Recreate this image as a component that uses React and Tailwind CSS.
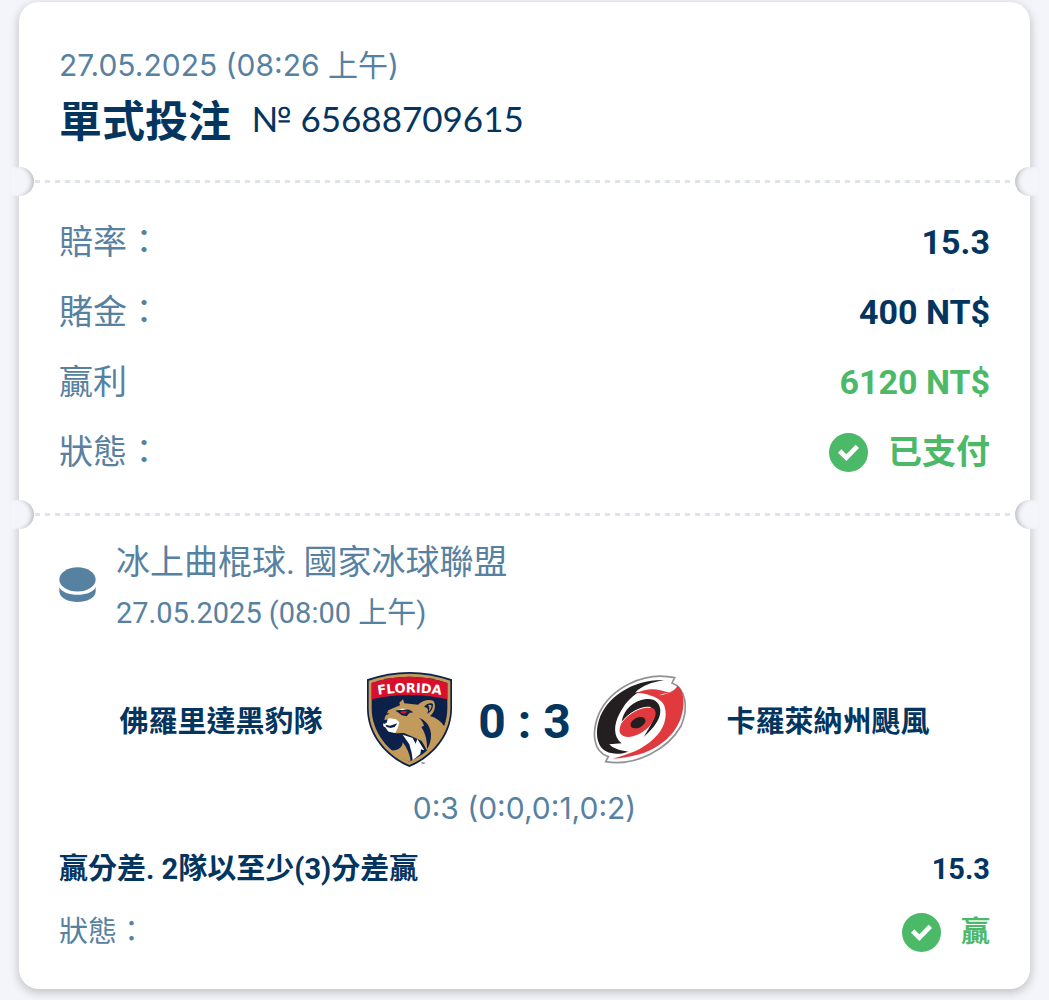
import React from "react";

const SANS = "font-['Roboto','Noto_Sans_CJK_TC',sans-serif]";
const CJK = "font-['Noto_Sans_CJK_TC',sans-serif]";
const GEO = "font-['Lato','Noto_Sans_CJK_TC',sans-serif]";
const WIDE = "font-['Inter','Noto_Sans_CJK_TC',sans-serif]";

function Divider() {
  return (
    <div className="relative h-[3px]">
      <div className="mx-4 h-full bg-[repeating-linear-gradient(90deg,#dfe3ee_0_5px,transparent_5px_10px)]" />
      <span className="absolute -left-2 -top-[13px] h-[29px] w-[23px] rounded-r-full bg-[#f4f5fa] shadow-[inset_-5px_0_5px_-3px_rgba(0,0,0,0.25)]" />
      <span className="absolute -right-2 -top-[13px] h-[29px] w-[23px] rounded-l-full bg-[#f4f5fa] shadow-[inset_5px_0_5px_-3px_rgba(0,0,0,0.25)]" />
    </div>
  );
}

function Check() {
  return (
    <svg viewBox="0 0 117 117" className="size-[39px] shrink-0" aria-hidden="true">
      <circle cx="58.5" cy="58.5" r="58.5" fill="#4cb968" />
      <path d="M32 54 L52 74 L85 40" fill="none" stroke="#fff" strokeWidth="14" />
    </svg>
  );
}

function Puck() {
  return (
    <svg viewBox="0 0 108 104" className="h-[35px] w-[37px] shrink-0" aria-hidden="true">
      <ellipse cx="54" cy="37" rx="54" ry="36" fill="#5781a1" />
      <path d="M0 60 C14 90 94 90 108 60 V73 C106 114 2 114 0 73 Z" fill="#5781a1" />
    </svg>
  );
}

function PanthersLogo() {
  return (
    <svg viewBox="33 36 288 288" className="size-24 shrink-0" role="img" aria-label="Florida Panthers">
      <path d="M51 58 Q178 14 306 58 V145 C306 225 250 292 178 321 C107 292 51 225 51 145 Z" fill="#0b2149" />
      <path d="M56 62 Q178 20 301 62 V145 C301 221 247 287 178 315 C110 287 56 221 56 145 Z" fill="#c29a5b" />
      <path d="M65 69 Q178 32 292 69 V145 C292 216 243 277 178 305 C114 277 65 216 65 145 Z" fill="#0b2149" />
      <path d="M65 69 Q178 32 292 69 V118 Q178 92 65 118 Z" fill="#d8102c" />
      <path id="shield-arc" d="M60 109 Q178 86 298 109" fill="none" />
      <text fontSize="39" fontWeight="700" fill="#fff" className="font-['DejaVu_Sans',sans-serif]">
        <textPath href="#shield-arc" startOffset="50%" textAnchor="middle">FLORIDA</textPath>
      </text>
      <path
        d="M104 173 L115 151 L136 142 L150 136 L148 128 L159 118 L163 130 L204 134 C216 121 236 117 250 122 C260 136 254 156 240 168 C258 173 274 184 284 201 C278 232 258 258 236 276 C230 274 226 258 214 242 L188 230 L162 219 L139 220 L113 213 L102 198 Z"
        fill="#c29a5b"
      />
      <path d="M222 140 C232 129 245 127 249 133 C249 148 241 158 231 162 C237 150 235 143 222 140 Z" fill="#0b2149" />
      <path d="M234 136 C241 132 245 135 245 139 C243 147 240 151 236 154 C239 146 239 141 234 136 Z" fill="#c29a5b" />
      <path d="M136 152 L158 147 L178 149 L190 157 L178 159 L170 169 L155 166 L146 158 Z" fill="#0b2149" />
      <path d="M150 155 L163 152 L173 155 L164 161 L154 160 Z" fill="#d8102c" />
      <path d="M140 149 L158 146 L172 147 L158 150 Z" fill="#fff" />
      <path d="M104 162 L118 158 L112 165 Z" fill="#0b2149" />
      <path d="M206 173 C226 180 241 196 243 222 C244 240 239 256 231 268 C232 246 228 222 214 201 L222 197 C219 186 214 179 206 173 Z" fill="#0b2149" />
      <path d="M99 181 L120 175 L138 178 L148 187 L144 202 L136 219 L116 215 L107 202 L100 199 Z" fill="#fff" />
      <path d="M98 180 L113 178 L110 188 L102 192 L97 187 Z" fill="#0b2149" />
      <path d="M106 194 L120 197 L142 190 L134 201 L122 204 L110 201 Z" fill="#0b2149" />
      <path d="M120 271 C145 274 157 262 158 247 C171 263 178 280 182 302 L178 305 C158 297 136 286 120 271 Z" fill="#c29a5b" />
      <path d="M158 224 L188 234 L197 251 L202 237 L223 271 L213 268 L211 282 L188 301 L185 278 L178 253 Z" fill="#fff" />
      <text x="212" y="319" fontSize="14" fontWeight="700" fill="#0b2149" className="font-['DejaVu_Sans',sans-serif]">™</text>
    </svg>
  );
}

function HurricanesLogo() {
  return (
    <svg viewBox="36 36 288 288" className="size-24 shrink-0" role="img" aria-label="Carolina Hurricanes">
      <path
        d="M284 53 L276 69 C318 84 326 144 303 198 C265 267 165 321 77 305 L85 290 C40 276 33 219 57 161 C91 86 191 32 284 53 Z"
        fill="#fff"
        stroke="#929294"
        strokeWidth="5"
      />
      <path
        d="M252 60 C159 58 80 110 57 180 C42 230 55 272 93 279 C111 283 129 281 145 275 C117 272 96 263 88 253 L125 250 C99 231 101 194 118 162 C133 132 151 112 177 95 L165 98 C187 76 215 67 252 60 Z"
        fill="#231f20"
      />
      <path
        d="M168 100 C192 86 221 86 238 90 L270 98 C255 99 243 103 235 106 C262 103 283 94 293 77 C314 93 315 139 303 172 C283 235 215 292 97 296 C150 282 188 267 221 236 C253 207 263 171 254 140 C247 121 227 111 209 106 C195 100 182 99 168 100 Z"
        fill="#e03a3e"
      />
      <path d="M125 193 C124 161 151 130 181 121 C218 109 240 125 241 151 C242 177 223 203 191 231 C211 199 231 169 220 151 C202 132 150 158 125 193 Z" fill="#231f20" />
      <path d="M119 207 C126 168 173 141 207 141 C234 144 232 169 211 195 C188 223 151 237 130 228 C120 223 117 216 119 207 Z" fill="#e03a3e" />
      <path d="M123 190 C144 159 184 138 212 142" fill="none" stroke="#fff" strokeWidth="3" />
      <ellipse cx="174" cy="188" rx="24" ry="15" transform="rotate(-26 174 188)" fill="#231f20" />
    </svg>
  );
}

function Row({ label, children, color = "text-[#03355f]" }) {
  return (
    <div className="flex h-[70px] items-center justify-between text-[34px]">
      <dt className="text-[#5781a1]">{label}</dt>
      <dd className={"flex items-center gap-5 font-bold " + color}>{children}</dd>
    </div>
  );
}

export default function App() {
  return (
    <div className={"min-h-screen bg-[#f4f5fa] px-[19px] pt-0.5 pb-[11px] text-[#03355f] " + SANS}>
      <main className="rounded-[20px] bg-white shadow-[0_3px_10px_1px_rgba(0,0,0,0.2)]">
        <header className="px-10 pt-[42px] pb-[30px]">
          <p className={"text-[30px] leading-[42px] text-[#5781a1] " + WIDE}>27.05.2025 (08:26 上午)</p>
          <div className="flex items-center gap-5 leading-[64px]">
            <h1 className={"text-[43px] font-bold " + CJK}>單式投注</h1>
            <span className={"text-[35px] " + GEO}>№ 65688709615</span>
          </div>
        </header>

        <Divider />

        <dl className="px-10 pt-6 pb-[26px]">
          <Row label="賠率：">15.3</Row>
          <Row label="賭金：">400 NT$</Row>
          <Row label="贏利" color="text-[#4cb968]">6120 NT$</Row>
          <Row label="狀態：" color="text-[#4cb968]"><Check />已支付</Row>
        </dl>

        <Divider />

        <section className="px-10 pt-[22px] pb-[37px]">
          <div className="flex items-start gap-5 text-[#5781a1]">
            <div className="pt-[29px]"><Puck /></div>
            <div>
              <h2 className="text-[34px] leading-[48px]">冰上曲棍球. 國家冰球聯盟</h2>
              <p className="text-[29px] leading-[54px]">27.05.2025 (08:00 上午)</p>
            </div>
          </div>

          <div className="mt-8 grid grid-cols-[1fr_auto_1fr] items-center px-[22px] text-center text-[29px] font-bold">
            <span className={CJK}>佛羅里達黑豹隊</span>
            <div className="flex items-center">
              <PanthersLogo />
              <span className="w-[135px] pt-1 text-[48px] leading-[52px]">0 : 3</span>
              <HurricanesLogo />
            </div>
            <span className={CJK}>卡羅萊納州颶風</span>
          </div>

          <p className={"mt-5 text-center text-[30px] leading-10 text-[#5781a1] " + WIDE}>0:3 (0:0,0:1,0:2)</p>

          <div className="mt-[21px] flex items-center justify-between text-[29px] leading-10 font-bold">
            <span>贏分差. 2隊以至少(3)分差贏</span>
            <span>15.3</span>
          </div>
          <div className="mt-[23px] flex items-center justify-between text-[29px] leading-10">
            <span className="text-[#5781a1]">狀態：</span>
            <span className="flex items-center gap-5 font-bold text-[#4cb968]"><Check />贏</span>
          </div>
        </section>
      </main>
    </div>
  );
}
